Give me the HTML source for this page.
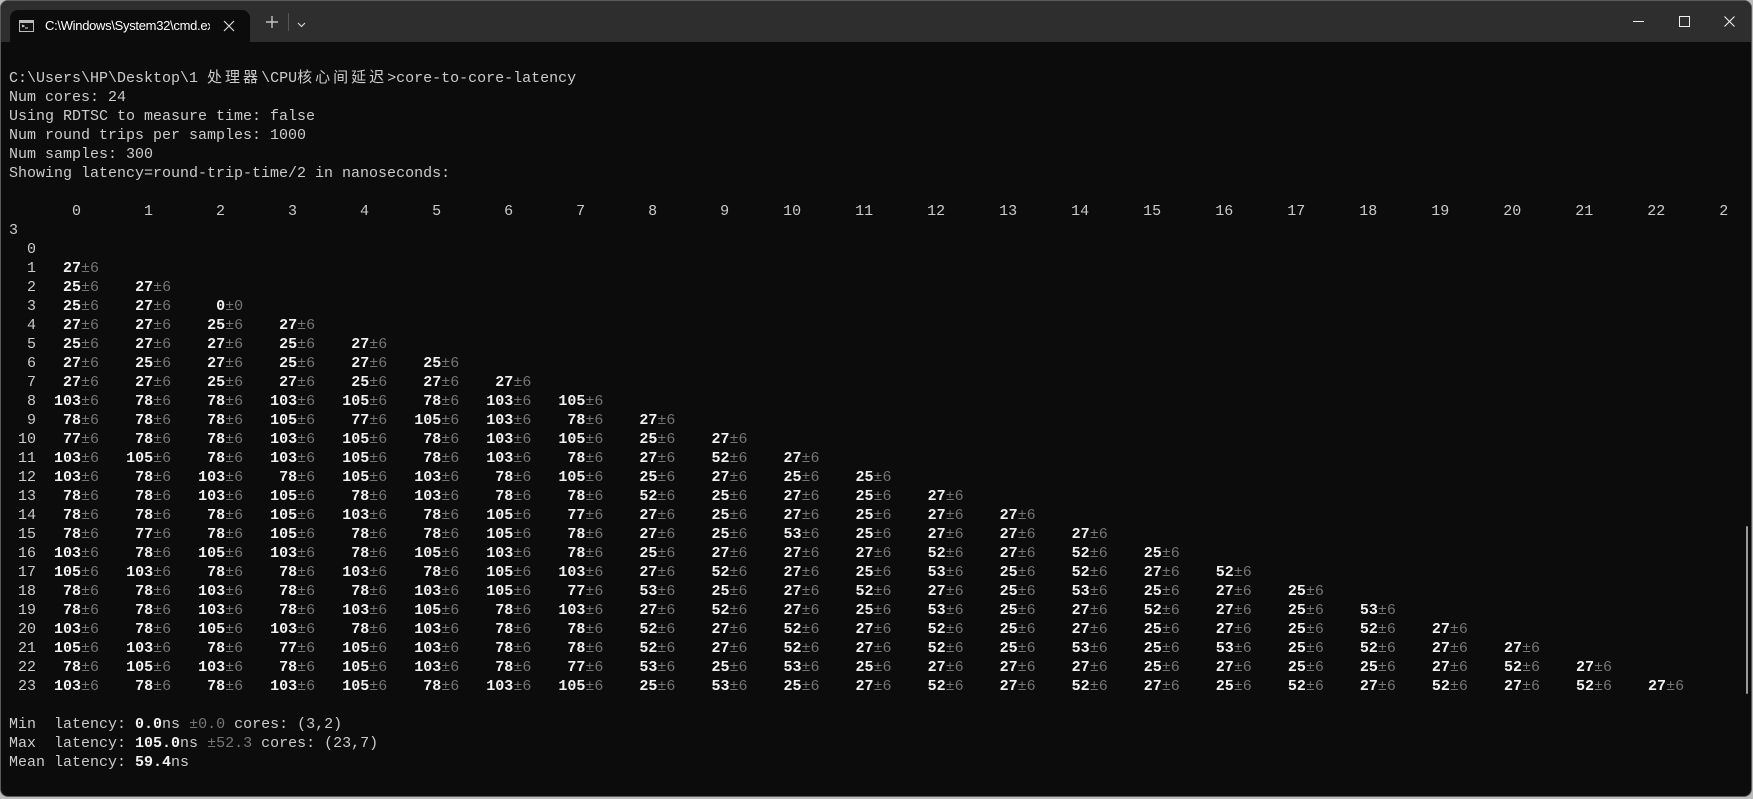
<!DOCTYPE html>
<html><head><meta charset="utf-8"><style>
html,body{margin:0;padding:0;width:1753px;height:799px;overflow:hidden;background:#bcbcbc}
.win{position:absolute;left:0;top:0;width:1752px;height:797px;background:#0c0c0c;border-radius:8px;overflow:hidden;border:1px solid #5a5a5a;box-sizing:border-box}
.bar{position:absolute;left:0;top:0;right:0;height:41px;background:#2e2e2e}
.tab{position:absolute;left:9px;top:9px;width:240px;height:32px;background:#0c0c0c;border-radius:8px 8px 0 0}
.tt{position:absolute;left:35px;top:8px;width:165px;overflow:hidden;white-space:nowrap;font:13px "Liberation Sans",sans-serif;color:#fff;letter-spacing:-0.3px}
pre{position:absolute;left:8px;top:68px;margin:0;font:15px/19px "Liberation Mono",monospace;color:#cccccc;white-space:pre}
.c{font-family:"Liberation Mono","Noto Sans CJK SC",monospace;letter-spacing:3px}
b{color:#f2f2f2;font-weight:bold}
i{font-style:normal;color:#767676}
.sb{position:absolute;left:1745px;top:525px;width:2px;height:168px;background:#9a9a9a;border-radius:1px}
</style></head><body>
<div class="win">
<div class="bar">
<div class="tab">
<svg style="position:absolute;left:9px;top:10px" width="15" height="12" viewBox="0 0 15 12"><rect x="0.5" y="0.5" width="14" height="11" fill="#111" stroke="#bbb"/><rect x="1" y="1" width="13" height="2" fill="#bbb"/><path d="M3 5l2 1-2 1M6 8h3" stroke="#ddd" fill="none"/></svg>
<div class="tt">C:\Windows\System32\cmd.exe</div>
<svg style="position:absolute;left:213px;top:10px" width="12" height="12" viewBox="0 0 12 12"><path d="M1 1L11 11M11 1L1 11" stroke="#ddd" stroke-width="1.2"/></svg>
</div>
<svg style="position:absolute;left:265px;top:15px" width="12" height="12" viewBox="0 0 12 12"><path d="M6 0V12M0 6H12" stroke="#ddd" stroke-width="1.2"/></svg>
<div style="position:absolute;left:287px;top:12px;width:1px;height:18px;background:#555"></div>
<svg style="position:absolute;left:296px;top:21px" width="9" height="6" viewBox="0 0 9 6"><path d="M1 1L4.5 4.5L8 1" stroke="#ddd" stroke-width="1.1" fill="none"/></svg>
<div style="position:absolute;left:1632px;top:20px;width:11px;height:1px;background:#eee"></div>
<div style="position:absolute;left:1678px;top:15px;width:9px;height:9px;border:1px solid #eee"></div>
<svg style="position:absolute;left:1723px;top:15px" width="11" height="11" viewBox="0 0 11 11"><path d="M0.5 0.5L10.5 10.5M10.5 0.5L0.5 10.5" stroke="#eee" stroke-width="1.1"/></svg>
</div>
<div class="sb"></div>
<pre>C:\Users\HP\Desktop\1 <span class="c">处理器</span>\CPU<span class="c">核心间延迟</span>&gt;core-to-core-latency
Num cores: 24
Using RDTSC to measure time: false
Num round trips per samples: 1000
Num samples: 300
Showing latency=round-trip-time/2 in nanoseconds:

       0       1       2       3       4       5       6       7       8       9      10      11      12      13      14      15      16      17      18      19      20      21      22      2
3
  0
  1   <b>27</b><i>±6</i>
  2   <b>25</b><i>±6</i>    <b>27</b><i>±6</i>
  3   <b>25</b><i>±6</i>    <b>27</b><i>±6</i>     <b>0</b><i>±0</i>
  4   <b>27</b><i>±6</i>    <b>27</b><i>±6</i>    <b>25</b><i>±6</i>    <b>27</b><i>±6</i>
  5   <b>25</b><i>±6</i>    <b>27</b><i>±6</i>    <b>27</b><i>±6</i>    <b>25</b><i>±6</i>    <b>27</b><i>±6</i>
  6   <b>27</b><i>±6</i>    <b>25</b><i>±6</i>    <b>27</b><i>±6</i>    <b>25</b><i>±6</i>    <b>27</b><i>±6</i>    <b>25</b><i>±6</i>
  7   <b>27</b><i>±6</i>    <b>27</b><i>±6</i>    <b>25</b><i>±6</i>    <b>27</b><i>±6</i>    <b>25</b><i>±6</i>    <b>27</b><i>±6</i>    <b>27</b><i>±6</i>
  8  <b>103</b><i>±6</i>    <b>78</b><i>±6</i>    <b>78</b><i>±6</i>   <b>103</b><i>±6</i>   <b>105</b><i>±6</i>    <b>78</b><i>±6</i>   <b>103</b><i>±6</i>   <b>105</b><i>±6</i>
  9   <b>78</b><i>±6</i>    <b>78</b><i>±6</i>    <b>78</b><i>±6</i>   <b>105</b><i>±6</i>    <b>77</b><i>±6</i>   <b>105</b><i>±6</i>   <b>103</b><i>±6</i>    <b>78</b><i>±6</i>    <b>27</b><i>±6</i>
 10   <b>77</b><i>±6</i>    <b>78</b><i>±6</i>    <b>78</b><i>±6</i>   <b>103</b><i>±6</i>   <b>105</b><i>±6</i>    <b>78</b><i>±6</i>   <b>103</b><i>±6</i>   <b>105</b><i>±6</i>    <b>25</b><i>±6</i>    <b>27</b><i>±6</i>
 11  <b>103</b><i>±6</i>   <b>105</b><i>±6</i>    <b>78</b><i>±6</i>   <b>103</b><i>±6</i>   <b>105</b><i>±6</i>    <b>78</b><i>±6</i>   <b>103</b><i>±6</i>    <b>78</b><i>±6</i>    <b>27</b><i>±6</i>    <b>52</b><i>±6</i>    <b>27</b><i>±6</i>
 12  <b>103</b><i>±6</i>    <b>78</b><i>±6</i>   <b>103</b><i>±6</i>    <b>78</b><i>±6</i>   <b>105</b><i>±6</i>   <b>103</b><i>±6</i>    <b>78</b><i>±6</i>   <b>105</b><i>±6</i>    <b>25</b><i>±6</i>    <b>27</b><i>±6</i>    <b>25</b><i>±6</i>    <b>25</b><i>±6</i>
 13   <b>78</b><i>±6</i>    <b>78</b><i>±6</i>   <b>103</b><i>±6</i>   <b>105</b><i>±6</i>    <b>78</b><i>±6</i>   <b>103</b><i>±6</i>    <b>78</b><i>±6</i>    <b>78</b><i>±6</i>    <b>52</b><i>±6</i>    <b>25</b><i>±6</i>    <b>27</b><i>±6</i>    <b>25</b><i>±6</i>    <b>27</b><i>±6</i>
 14   <b>78</b><i>±6</i>    <b>78</b><i>±6</i>    <b>78</b><i>±6</i>   <b>105</b><i>±6</i>   <b>103</b><i>±6</i>    <b>78</b><i>±6</i>   <b>105</b><i>±6</i>    <b>77</b><i>±6</i>    <b>27</b><i>±6</i>    <b>25</b><i>±6</i>    <b>27</b><i>±6</i>    <b>25</b><i>±6</i>    <b>27</b><i>±6</i>    <b>27</b><i>±6</i>
 15   <b>78</b><i>±6</i>    <b>77</b><i>±6</i>    <b>78</b><i>±6</i>   <b>105</b><i>±6</i>    <b>78</b><i>±6</i>    <b>78</b><i>±6</i>   <b>105</b><i>±6</i>    <b>78</b><i>±6</i>    <b>27</b><i>±6</i>    <b>25</b><i>±6</i>    <b>53</b><i>±6</i>    <b>25</b><i>±6</i>    <b>27</b><i>±6</i>    <b>27</b><i>±6</i>    <b>27</b><i>±6</i>
 16  <b>103</b><i>±6</i>    <b>78</b><i>±6</i>   <b>105</b><i>±6</i>   <b>103</b><i>±6</i>    <b>78</b><i>±6</i>   <b>105</b><i>±6</i>   <b>103</b><i>±6</i>    <b>78</b><i>±6</i>    <b>25</b><i>±6</i>    <b>27</b><i>±6</i>    <b>27</b><i>±6</i>    <b>27</b><i>±6</i>    <b>52</b><i>±6</i>    <b>27</b><i>±6</i>    <b>52</b><i>±6</i>    <b>25</b><i>±6</i>
 17  <b>105</b><i>±6</i>   <b>103</b><i>±6</i>    <b>78</b><i>±6</i>    <b>78</b><i>±6</i>   <b>103</b><i>±6</i>    <b>78</b><i>±6</i>   <b>105</b><i>±6</i>   <b>103</b><i>±6</i>    <b>27</b><i>±6</i>    <b>52</b><i>±6</i>    <b>27</b><i>±6</i>    <b>25</b><i>±6</i>    <b>53</b><i>±6</i>    <b>25</b><i>±6</i>    <b>52</b><i>±6</i>    <b>27</b><i>±6</i>    <b>52</b><i>±6</i>
 18   <b>78</b><i>±6</i>    <b>78</b><i>±6</i>   <b>103</b><i>±6</i>    <b>78</b><i>±6</i>    <b>78</b><i>±6</i>   <b>103</b><i>±6</i>   <b>105</b><i>±6</i>    <b>77</b><i>±6</i>    <b>53</b><i>±6</i>    <b>25</b><i>±6</i>    <b>27</b><i>±6</i>    <b>52</b><i>±6</i>    <b>27</b><i>±6</i>    <b>25</b><i>±6</i>    <b>53</b><i>±6</i>    <b>25</b><i>±6</i>    <b>27</b><i>±6</i>    <b>25</b><i>±6</i>
 19   <b>78</b><i>±6</i>    <b>78</b><i>±6</i>   <b>103</b><i>±6</i>    <b>78</b><i>±6</i>   <b>103</b><i>±6</i>   <b>105</b><i>±6</i>    <b>78</b><i>±6</i>   <b>103</b><i>±6</i>    <b>27</b><i>±6</i>    <b>52</b><i>±6</i>    <b>27</b><i>±6</i>    <b>25</b><i>±6</i>    <b>53</b><i>±6</i>    <b>25</b><i>±6</i>    <b>27</b><i>±6</i>    <b>52</b><i>±6</i>    <b>27</b><i>±6</i>    <b>25</b><i>±6</i>    <b>53</b><i>±6</i>
 20  <b>103</b><i>±6</i>    <b>78</b><i>±6</i>   <b>105</b><i>±6</i>   <b>103</b><i>±6</i>    <b>78</b><i>±6</i>   <b>103</b><i>±6</i>    <b>78</b><i>±6</i>    <b>78</b><i>±6</i>    <b>52</b><i>±6</i>    <b>27</b><i>±6</i>    <b>52</b><i>±6</i>    <b>27</b><i>±6</i>    <b>52</b><i>±6</i>    <b>25</b><i>±6</i>    <b>27</b><i>±6</i>    <b>25</b><i>±6</i>    <b>27</b><i>±6</i>    <b>25</b><i>±6</i>    <b>52</b><i>±6</i>    <b>27</b><i>±6</i>
 21  <b>105</b><i>±6</i>   <b>103</b><i>±6</i>    <b>78</b><i>±6</i>    <b>77</b><i>±6</i>   <b>105</b><i>±6</i>   <b>103</b><i>±6</i>    <b>78</b><i>±6</i>    <b>78</b><i>±6</i>    <b>52</b><i>±6</i>    <b>27</b><i>±6</i>    <b>52</b><i>±6</i>    <b>27</b><i>±6</i>    <b>52</b><i>±6</i>    <b>25</b><i>±6</i>    <b>53</b><i>±6</i>    <b>25</b><i>±6</i>    <b>53</b><i>±6</i>    <b>25</b><i>±6</i>    <b>52</b><i>±6</i>    <b>27</b><i>±6</i>    <b>27</b><i>±6</i>
 22   <b>78</b><i>±6</i>   <b>105</b><i>±6</i>   <b>103</b><i>±6</i>    <b>78</b><i>±6</i>   <b>105</b><i>±6</i>   <b>103</b><i>±6</i>    <b>78</b><i>±6</i>    <b>77</b><i>±6</i>    <b>53</b><i>±6</i>    <b>25</b><i>±6</i>    <b>53</b><i>±6</i>    <b>25</b><i>±6</i>    <b>27</b><i>±6</i>    <b>27</b><i>±6</i>    <b>27</b><i>±6</i>    <b>25</b><i>±6</i>    <b>27</b><i>±6</i>    <b>25</b><i>±6</i>    <b>25</b><i>±6</i>    <b>27</b><i>±6</i>    <b>52</b><i>±6</i>    <b>27</b><i>±6</i>
 23  <b>103</b><i>±6</i>    <b>78</b><i>±6</i>    <b>78</b><i>±6</i>   <b>103</b><i>±6</i>   <b>105</b><i>±6</i>    <b>78</b><i>±6</i>   <b>103</b><i>±6</i>   <b>105</b><i>±6</i>    <b>25</b><i>±6</i>    <b>53</b><i>±6</i>    <b>25</b><i>±6</i>    <b>27</b><i>±6</i>    <b>52</b><i>±6</i>    <b>27</b><i>±6</i>    <b>52</b><i>±6</i>    <b>27</b><i>±6</i>    <b>25</b><i>±6</i>    <b>52</b><i>±6</i>    <b>27</b><i>±6</i>    <b>52</b><i>±6</i>    <b>27</b><i>±6</i>    <b>52</b><i>±6</i>    <b>27</b><i>±6</i>

Min  latency: <b>0.0</b>ns <i>±0.0</i> cores: (3,2)
Max  latency: <b>105.0</b>ns <i>±52.3</i> cores: (23,7)
Mean latency: <b>59.4</b>ns</pre>
</div>
</body></html>
